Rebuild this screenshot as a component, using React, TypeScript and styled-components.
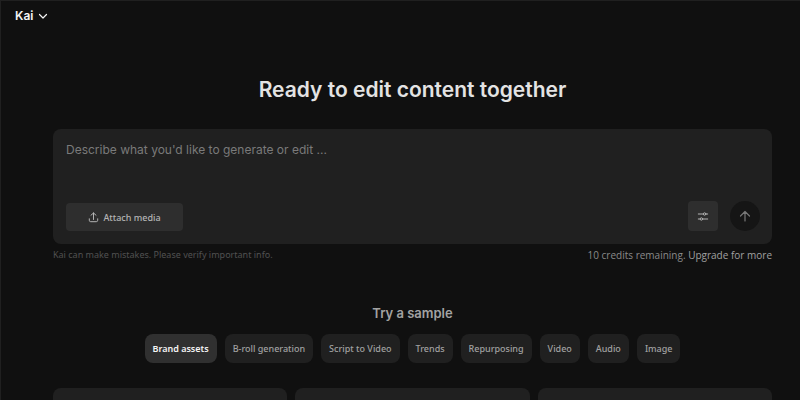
import React, { useState } from "react";
import styled, { createGlobalStyle } from "styled-components";

const GlobalStyle = createGlobalStyle`
  *, *::before, *::after { box-sizing: border-box; }
  body {
    margin: 0;
    background: #101010;
    color: #a6a6a6;
    font-family: "Noto Sans", sans-serif;
  }
  button { font: inherit; border: 0; margin: 0; cursor: pointer; }
`;

const Page = styled.div`
  height: 100vh;
  overflow: hidden;
  border-top: 1px solid #202020;
  border-left: 1px solid #202020;
`;

const TopBar = styled.header`
  display: flex;
  height: 30px;
  align-items: center;
  padding: 0 14px;
`;

const AgentMenu = styled.button`
  display: flex;
  align-items: center;
  gap: 4px;
  padding: 0;
  background: none;
  color: #f5f5f5;
  font-family: Inter, sans-serif;
  font-size: 12px;
  font-weight: 600;
  line-height: 16px;
`;

const Main = styled.main`
  display: flex;
  flex-direction: column;
  padding: 42px 28px 0 52px;
`;

const Title = styled.h1`
  margin: 0;
  color: #e3e3e3;
  font-family: Inter, sans-serif;
  font-size: 21px;
  font-weight: 600;
  line-height: 34px;
  text-align: center;
`;

const Composer = styled.form`
  display: flex;
  flex-direction: column;
  margin-top: 22px;
  padding: 13px 12px 13px 13px;
  border-radius: 8px;
  background: #202020;
`;

const Prompt = styled.textarea`
  display: block;
  width: 100%;
  height: 59px;
  padding: 0;
  border: 0;
  outline: 0;
  resize: none;
  background: transparent;
  color: #e3e3e3;
  font-family: Inter, sans-serif;
  font-size: 12px;
  line-height: 16px;
  &::placeholder { color: #7a7a7a; opacity: 1; }
`;

const Actions = styled.div`
  display: flex;
  align-items: flex-end;
  gap: 12px;
`;

const AttachButton = styled.button`
  display: flex;
  align-items: center;
  justify-content: center;
  gap: 4px;
  width: 117px;
  height: 28px;
  margin-right: auto;
  border-radius: 4px;
  background: #2e2e2e;
  color: #b4b4b4;
  font-size: 9px;
  font-weight: 500;
`;

const IconButton = styled.button<{ $round?: boolean }>`
  display: flex;
  align-items: center;
  justify-content: center;
  width: 30px;
  height: 30px;
  padding: 0;
  border-radius: ${(p) => (p.$round ? "50%" : "4px")};
  background: ${(p) => (p.$round ? "#151515" : "#2e2e2e")};
  color: ${(p) => (p.$round ? "#777" : "#b4b4b4")};
`;

const Notes = styled.div`
  display: flex;
  justify-content: space-between;
  margin-top: 4px;
  font-size: 9px;
  line-height: 14px;
`;

const Disclaimer = styled.span`
  color: #515151;
`;

const Credits = styled.span`
  color: #8a8a8a;
  font-family: "Open Sans", sans-serif;
  font-size: 10px;
`;

const UpgradeLink = styled.a`
  color: #a0a0a0;
  font-weight: 500;
  text-decoration: none;
`;

const Subtitle = styled.h2`
  margin: 42px 0 0;
  color: #a3a3a3;
  font-family: Inter, sans-serif;
  font-size: 13px;
  font-weight: 600;
  line-height: 18px;
  text-align: center;
`;

const Chips = styled.div`
  display: flex;
  justify-content: center;
  gap: 8px;
  margin-top: 12px;
`;

const Chip = styled.button<{ $active: boolean }>`
  height: 29px;
  padding: 0 8px;
  border-radius: 8px;
  background: ${(p) => (p.$active ? "#303030" : "#202020")};
  color: ${(p) => (p.$active ? "#f5f5f5" : "#a0a0a0")};
  font-size: 9px;
  font-weight: ${(p) => (p.$active ? 600 : 500)};
  white-space: nowrap;
`;

const Samples = styled.div`
  display: grid;
  grid-template-columns: repeat(3, 1fr);
  gap: 8px;
  margin-top: 25px;
`;

const SampleCard = styled.article`
  height: 120px;
  border-radius: 8px;
  background: #202020;
`;

const categories = [
  "Brand assets",
  "B-roll generation",
  "Script to Video",
  "Trends",
  "Repurposing",
  "Video",
  "Audio",
  "Image",
];

const line = {
  fill: "none",
  stroke: "currentColor",
  strokeLinecap: "round",
  strokeLinejoin: "round",
} as const;

const ChevronIcon = () => (
  <svg width="12" height="12" viewBox="0 0 12 12" strokeWidth="1.2" {...line}>
    <path d="M2.500 4.500 6 8l3.500-3.500" />
  </svg>
);

const UploadIcon = () => (
  <svg width="11" height="11" viewBox="0 0 11 11" strokeWidth="1" {...line}>
    <path d="M5.500 7.500v-6.500M3 3.200 5.500 1 8 3.200M1.300 6.800v1.500c0 .9.500 1.400 1.400 1.400h5.600c.9 0 1.400-.5 1.400-1.400V6.800" />
  </svg>
);

const SlidersIcon = () => (
  <svg width="12" height="12" viewBox="0 0 12 12" strokeWidth="1" {...line}>
    <path d="M1.300 4h4.900M9 4h1.700M1.300 9H3M5.800 9h4.900" />
    <circle cx="7.600" cy="4" r="1.200" />
    <circle cx="4.400" cy="9" r="1.200" />
  </svg>
);

const ArrowUpIcon = () => (
  <svg width="12" height="12" viewBox="0 0 12 12" strokeWidth="1.200" {...line}>
    <path d="M6 11V1.500M1.500 6 6 1.500 10.500 6" />
  </svg>
);

export default function App() {
  const [active, setActive] = useState(categories[0]);
  return (
    <>
      <GlobalStyle />
      <Page>
        <TopBar>
          <AgentMenu type="button" aria-haspopup="menu">
            Kai
            <ChevronIcon />
          </AgentMenu>
        </TopBar>
        <Main>
          <Title>Ready to edit content together</Title>
          <Composer onSubmit={(e) => e.preventDefault()}>
            <Prompt
              aria-label="Prompt"
              placeholder="Describe what you'd like to generate or edit ..."
            />
            <Actions>
              <AttachButton type="button">
                <UploadIcon />
                Attach media
              </AttachButton>
              <IconButton type="button" aria-label="Settings">
                <SlidersIcon />
              </IconButton>
              <IconButton type="submit" aria-label="Send" $round>
                <ArrowUpIcon />
              </IconButton>
            </Actions>
          </Composer>
          <Notes>
            <Disclaimer>Kai can make mistakes. Please verify important info.</Disclaimer>
            <Credits>
              10 credits remaining. <UpgradeLink href="#upgrade">Upgrade for more</UpgradeLink>
            </Credits>
          </Notes>
          <Subtitle>Try a sample</Subtitle>
          <Chips>
            {categories.map((name) => (
              <Chip
                key={name}
                type="button"
                aria-pressed={name === active}
                $active={name === active}
                onClick={() => setActive(name)}
              >
                {name}
              </Chip>
            ))}
          </Chips>
          <Samples>
            <SampleCard />
            <SampleCard />
            <SampleCard />
          </Samples>
        </Main>
      </Page>
    </>
  );
}
